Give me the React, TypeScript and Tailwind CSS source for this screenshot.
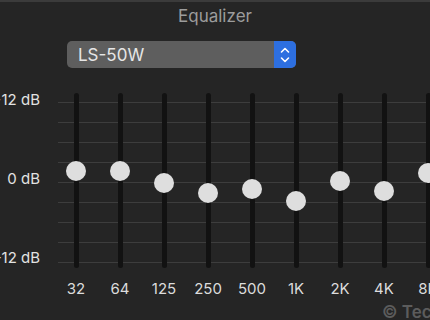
const bands = [
  { label: "32", knob: 171 },
  { label: "64", knob: 171 },
  { label: "125", knob: 183 },
  { label: "250", knob: 193 },
  { label: "500", knob: 189 },
  { label: "1K", knob: 201 },
  { label: "2K", knob: 181 },
  { label: "4K", knob: 191 },
  { label: "8K", knob: 173 },
];

// graph area starts at y=88 on the page
const GRAPH_TOP = 88;

export default function App() {
  return (
    <div
      className="relative w-[430px] h-[320px] overflow-hidden bg-[#252525] border-t-2 border-[#3b3b3b]"
      style={{ fontFamily: "Inter, 'Liberation Sans', sans-serif" }}
    >
      <div className="pt-[4px] text-center text-[17px] leading-[20px] text-[#9c9c9c]">
        Equalizer
      </div>

      <div className="ml-[67px] mt-[15px] flex h-[27px] w-[229px] items-center rounded-[5px] bg-[#5e5e5e]">
        <span className="flex-1 pl-[11px] text-[17px] leading-[20px] text-[#e6e6e6]">
          LS-50W
        </span>
        <div className="flex h-full w-[22px] items-center justify-center rounded-r-[5px] bg-[#2d6fe0]">
          <svg width="12" height="20" viewBox="0 0 12 20" fill="none">
            <path d="M2.5 7 L6 3.5 L9.5 7" stroke="#fff" strokeWidth="1.6" strokeLinecap="round" strokeLinejoin="round" />
            <path d="M2.5 13 L6 16.5 L9.5 13" stroke="#fff" strokeWidth="1.6" strokeLinecap="round" strokeLinejoin="round" />
          </svg>
        </div>
      </div>

      <div className="relative mt-[20px] flex h-[190px]">
        <div className="absolute left-[58px] right-0 top-[14px] flex flex-col gap-[19px]">
          {Array.from({ length: 9 }).map((_, i) => (
            <div key={i} className="h-px bg-[#3d3d3d]" />
          ))}
        </div>

        <div className="flex w-[54px] shrink-0 flex-col items-end justify-between overflow-hidden pb-[11px] pr-[14px] pt-[3px] text-[15px] leading-[18px] text-[#e2e2e2] whitespace-nowrap">
          <span>+12 dB</span>
          <span>0 dB</span>
          <span>-12 dB</span>
        </div>

        {bands.map((b) => (
          <div key={b.label} className="relative flex w-[44px] shrink-0 justify-center">
            <div className="mt-[5px] h-[175px] w-[5px] rounded-full bg-[#121212]" />
            <div
              className="absolute left-1/2 h-[20px] w-[20px] -translate-x-1/2 rounded-full bg-[#dedede]"
              style={{ top: b.knob - GRAPH_TOP - 10 }}
            />
          </div>
        ))}
      </div>

      <div className="mt-[2px] flex pl-[54px] text-[15px] leading-[18px] text-[#dcdcdc]">
        {bands.map((b) => (
          <span key={b.label} className="w-[44px] shrink-0 text-center">
            {b.label}
          </span>
        ))}
      </div>

      <div className="absolute left-[382px] top-[300px] whitespace-nowrap text-[17px] font-semibold leading-[20px] text-[#5c5c5c]">
        © TechNadu
      </div>
    </div>
  );
}
